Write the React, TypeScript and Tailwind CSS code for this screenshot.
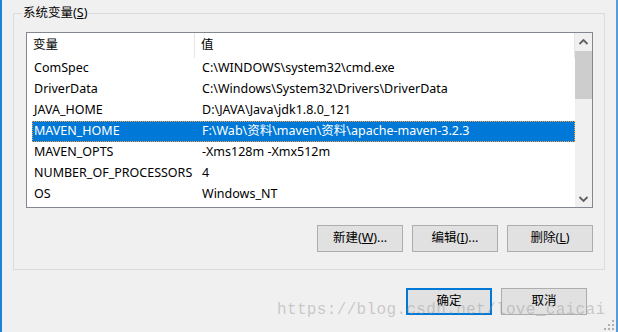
import { ReactNode } from 'react';

interface EnvVar {
  name: string;
  value: string;
}

const vars: EnvVar[] = [
  { name: 'ComSpec', value: 'C:\\WINDOWS\\system32\\cmd.exe' },
  { name: 'DriverData', value: 'C:\\Windows\\System32\\Drivers\\DriverData' },
  { name: 'JAVA_HOME', value: 'D:\\JAVA\\Java\\jdk1.8.0_121' },
  { name: 'MAVEN_HOME', value: 'F:\\Wab\\资料\\maven\\资料\\apache-maven-3.2.3' },
  { name: 'MAVEN_OPTS', value: '-Xms128m -Xmx512m' },
  { name: 'NUMBER_OF_PROCESSORS', value: '4' },
  { name: 'OS', value: 'Windows_NT' },
];

const SELECTED = 3;

// Windows-style push button
function WinButton({ children, focused }: { children: ReactNode; focused?: boolean }) {
  return (
    <div
      className={`w-[86px] h-[27px] flex items-center justify-center bg-[#e1e1e1] text-black ${
        focused ? 'border-2 border-[#0078d7]' : 'border border-[#adadad]'
      }`}
    >
      {children}
    </div>
  );
}

function Chevron({ up }: { up?: boolean }) {
  return (
    <svg width="17" height="17" viewBox="0 0 17 17">
      <polyline
        points={up ? '4.5,11 8.5,7 12.5,11' : '4.5,7 8.5,11 12.5,7'}
        fill="none"
        stroke="#606060"
        strokeWidth="1.8"
      />
    </svg>
  );
}

export default function App() {
  return (
    <div
      className="relative w-[618px] h-[332px] overflow-hidden bg-[#f0f0f0] border-l-2 border-r-2 border-l-[#1883d7] border-r-[#5a9ad8] text-[12.5px] text-black"
      style={{ fontFamily: '"Noto Sans", "Noto Sans CJK SC", sans-serif' }}
    >
      {/* ── Group box: 系统变量 ── */}
      <div className="relative ml-[11px] mt-[13px] w-[592px] h-[257px] border border-[#dcdcdc]">
        <span className="absolute left-[8px] -top-[9px] px-[1px] bg-[#f0f0f0] leading-[16px]">
          系统变量(<span className="underline">S</span>)
        </span>

        <div className="ml-[12px] mt-[18px] w-[567px] h-[176px] border border-[#828790] bg-white flex">
          {/* list body */}
          <div className="flex-1 flex flex-col">
            <div className="h-[25px] flex">
              <div className="w-[168px] h-full border-r border-[#e5e5e5] flex items-center pl-[6px]">变量</div>
              <div className="flex-1 h-full border-r border-[#e5e5e5] flex items-center pl-[6px]">值</div>
            </div>
            {vars.map((v, i) => {
              const sel = i === SELECTED;
              return (
                <div key={v.name} className="h-[21px] flex pl-[5px]">
                  <div
                    className={`flex-1 flex items-center ${
                      sel
                        ? 'bg-[#0078d7] text-white border border-dotted border-[#f5a142] pl-[1px]'
                        : 'pl-[2px]'
                    }`}
                  >
                    <span className="w-[168px] whitespace-nowrap">{v.name}</span>
                    <span className="whitespace-nowrap">{v.value}</span>
                  </div>
                </div>
              );
            })}
          </div>

          {/* scrollbar */}
          <div className="w-[17px] bg-[#f0f0f0] flex flex-col">
            <Chevron up />
            <div className="mt-[1px] h-[48px] bg-[#cdcdcd]" />
            <div className="flex-1" />
            <Chevron />
          </div>
        </div>

        <div className="ml-[12px] mt-[17px] w-[567px] flex justify-end gap-[9px]">
          <WinButton>
            新建(<span className="underline">W</span>)...
          </WinButton>
          <WinButton>
            编辑(<span className="underline">I</span>)...
          </WinButton>
          <WinButton>
            删除(<span className="underline">L</span>)
          </WinButton>
        </div>
      </div>

      {/* ── Dialog buttons ── */}
      <div className="mt-[18px] flex justify-end gap-[9px] pr-[29px]">
        <WinButton focused>确定</WinButton>
        <WinButton>取消</WinButton>
      </div>

      {/* watermark */}
      <div
        className="absolute left-[275px] top-[298px] text-[16px] leading-[24px] tracking-[0.35px] text-[rgba(150,150,150,0.45)] whitespace-nowrap pointer-events-none"
        style={{ fontFamily: '"Liberation Mono", monospace' }}
      >
        https://blog.csdn.net/love_caicai
      </div>

      {/* resize grip */}
      <svg className="absolute right-[1px] bottom-[1px]" width="12" height="12" viewBox="0 0 12 12">
        {[
          [9, 1],
          [5, 5],
          [9, 5],
          [1, 9],
          [5, 9],
          [9, 9],
        ].map(([x, y]) => (
          <rect key={`${x}-${y}`} x={x} y={y} width="2" height="2" fill="#b0b0b0" />
        ))}
      </svg>
    </div>
  );
}
